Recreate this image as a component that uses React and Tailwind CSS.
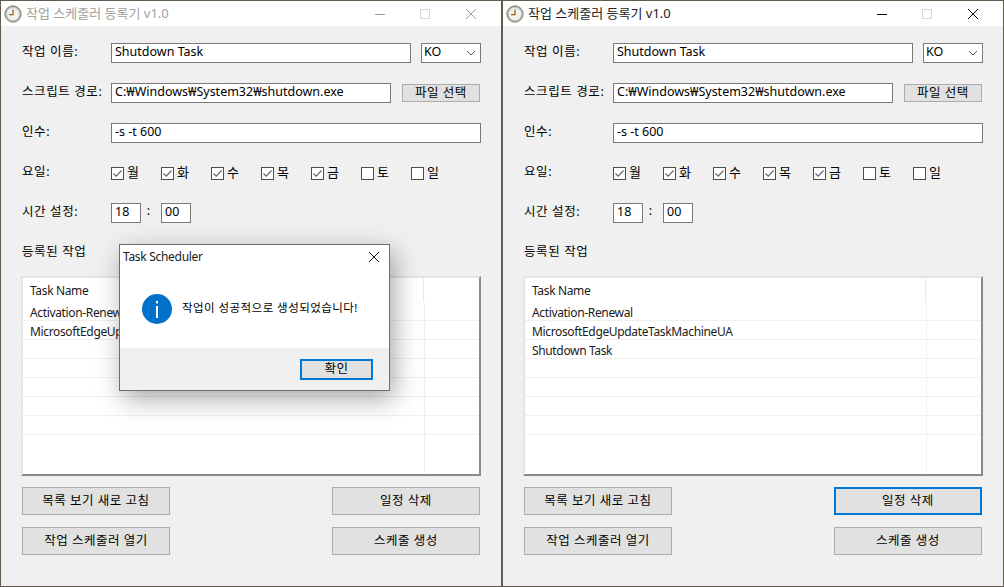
const font = 'font-["Noto_Sans","Noto_Sans_CJK_KR",sans-serif]'

const days = [
  { label: '월', on: true },
  { label: '화', on: true },
  { label: '수', on: true },
  { label: '목', on: true },
  { label: '금', on: true },
  { label: '토', on: false },
  { label: '일', on: false },
]

function ClockIcon() {
  return (
    <svg width="18" height="18" viewBox="0 0 18 18" className="shrink-0">
      <circle cx="9" cy="9" r="8.2" fill="#b9b2a2" stroke="#8b8778" strokeWidth="1" />
      <circle cx="9" cy="9" r="6.4" fill="#f6f3ea" stroke="#a7d0e8" strokeWidth="0.8" />
      <path d="M9 4.5V9.6H5" fill="none" stroke="#8a6a1e" strokeWidth="1.3" />
    </svg>
  )
}

function TitleBar({ active }) {
  const c = active ? '#000000' : '#9b9b9b'
  return (
    <div className="flex items-center h-[25px] bg-white shrink-0 pl-[3px]">
      <ClockIcon />
      <span className={`ml-[4px] text-[13px] ${active ? 'text-[#222222]' : 'text-[#a0a0a0]'}`}>
        작업 스케줄러 등록기 v1.0
      </span>
      <svg width="110" height="12" viewBox="0 0 110 12" className="ml-auto mr-[16px]">
        <path d="M0 6.5H10" stroke={c} />
        <rect x="45.5" y="1.5" width="9" height="9" fill="none" stroke="#d6d6d6" />
        <path d="M91 1L101 11M101 1L91 11" stroke={c} />
      </svg>
    </div>
  )
}

function TextBox({ className, children }) {
  return (
    <div className={`h-5 bg-white border border-[#7a7a7a] pl-[3px] pb-[2px] flex items-center text-[12.5px] leading-4 whitespace-nowrap overflow-hidden ${className}`}>
      {children}
    </div>
  )
}

function Label({ children }) {
  return <div className="w-[89px] shrink-0 pb-[2px] text-[12.5px] leading-4 tracking-[0.6px] whitespace-nowrap">{children}</div>
}

function DayCheck({ label, on }) {
  return (
    <div className="flex items-center w-[50px]">
      <div className="w-[13px] h-[13px] bg-white border border-[#4d4d4d] flex items-center justify-center">
        {on && (
          <svg width="11" height="11" viewBox="0 0 11 11">
            <path d="M1.5 5.5L4.2 8.2L9.5 2.5" fill="none" stroke="#666666" strokeWidth="1.2" />
          </svg>
        )}
      </div>
      <span className="ml-[3px] pb-[2px] text-[13px] leading-4">{label}</span>
    </div>
  )
}

function Btn({ children, focused, className = '' }) {
  return (
    <div className={`flex items-center justify-center bg-[#e1e1e1] text-[12.5px] leading-4 tracking-[0.5px] ${focused ? 'border-2 border-[#0078d7]' : 'border border-[#adadad]'} ${className}`}>
      {children}
    </div>
  )
}

function TaskList({ tasks }) {
  const rows = Array.from({ length: 8 }, (_, i) => tasks[i] || '')
  return (
    <div className="mt-[13px] -ml-px w-[460px] h-[200px] border-2 border-t-[#e4e4e4] border-l-[#e4e4e4] border-r-[#8a8a8a] border-b-[#8a8a8a] bg-white text-[12px] tracking-[-0.35px] text-[#1a1a1a] overflow-hidden">
      <div className="flex h-[24px]">
        <div className="w-[401px] border-r border-[#e8e8e8] pl-[7px] pt-[2px] flex items-center">Task Name</div>
      </div>
      {rows.map((t, i) => (
        <div key={i} className="flex h-[19px] border-b border-[#efefef] last:border-b-0 last:h-[39px]">
          <div className="w-[402px] border-r border-[#efefef] pl-[7px] pt-[3px] leading-[15px] whitespace-nowrap overflow-hidden">{t}</div>
        </div>
      ))}
    </div>
  )
}

function SchedulerWindow({ active, tasks, deleteFocused, children }) {
  return (
    <div className="relative w-[502px] h-[587px] border border-[#5f5c4e] flex flex-col bg-[#f0f0f0] shrink-0">
      <TitleBar active={active} />
      <div className="pl-[21px] pt-[17px] flex flex-col flex-1">
        <div className="flex flex-col gap-5">
          <div className="flex items-center">
            <Label>작업 이름:</Label>
            <TextBox className="w-[300px]">Shutdown Task</TextBox>
            <div className="ml-[10px] w-[60px] h-5 bg-white border border-[#7a7a7a] pl-[2px] pb-[2px] flex items-center justify-between text-[12.5px] leading-4">
              KO
              <svg width="10" height="6" viewBox="0 0 10 6" className="mr-[4px] mt-[2px]">
                <path d="M1 1L5 5L9 1" fill="none" stroke="#555555" />
              </svg>
            </div>
          </div>
          <div className="flex items-center">
            <Label>스크립트 경로:</Label>
            <TextBox className="w-[280px]">C:₩Windows₩System32₩shutdown.exe</TextBox>
            <Btn className="ml-[11px] w-[78px] h-[18px]">파일 선택</Btn>
          </div>
          <div className="flex items-center">
            <Label>인수:</Label>
            <TextBox className="w-[370px]">-s -t 600</TextBox>
          </div>
          <div className="flex items-center h-5">
            <Label>요일:</Label>
            {days.map(d => <DayCheck key={d.label} label={d.label} on={d.on} />)}
          </div>
          <div className="flex items-center">
            <Label>시간 설정:</Label>
            <TextBox className="w-[30px]">18</TextBox>
            <span className="w-[20px] pb-[4px] pr-[5px] text-center text-[12.5px] leading-4">:</span>
            <TextBox className="w-[30px]">00</TextBox>
          </div>
          <div className="h-5 pb-[2px] text-[12.5px] leading-4 tracking-[0.6px] flex items-center">등록된 작업</div>
        </div>

        <TaskList tasks={tasks} />

        <div className="mt-[11px] grid grid-cols-[148px_148px] justify-between w-[458px] gap-y-3">
          <Btn className="h-[28px]">목록 보기 새로 고침</Btn>
          <Btn className="h-[28px]" focused={deleteFocused}>일정 삭제</Btn>
          <Btn className="h-[28px]">작업 스케줄러 열기</Btn>
          <Btn className="h-[28px]">스케줄 생성</Btn>
        </div>
      </div>
      {children}
    </div>
  )
}

function MessageBox() {
  return (
    <div className="absolute left-[118px] top-[243px] w-[271px] h-[147px] bg-white border border-[#6d6d6d] shadow-[4px_8px_24px_rgba(0,0,0,0.35)] flex flex-col">
      <div className="flex items-center justify-between h-[24px] pl-[3px] pr-[9px] text-[12px] tracking-[-0.3px] text-[#1a1a1a]">
        Task Scheduler
        <svg width="12" height="12" viewBox="0 0 12 12">
          <path d="M1 1L11 11M11 1L1 11" stroke="#111111" />
        </svg>
      </div>
      <div className="flex items-center flex-1 pl-[22px]">
        <svg width="30" height="30" viewBox="0 0 30 30" className="shrink-0">
          <circle cx="15" cy="15" r="15" fill="#0070c9" />
          <rect x="14" y="12" width="2" height="12" fill="#ffffff" />
          <rect x="14" y="7" width="2" height="2.4" fill="#ffffff" />
        </svg>
        <span className="ml-[10px] pb-[2px] text-[11.5px] tracking-[0.45px] whitespace-nowrap">작업이 성공적으로 생성되었습니다!</span>
      </div>
      <div className="h-[42px] bg-[#f0f0f0] flex items-center justify-end pr-[16px]">
        <Btn focused className="w-[73px] h-[21px]">확인</Btn>
      </div>
    </div>
  )
}

export default function App() {
  return (
    <div className={`flex w-[1004px] h-[587px] overflow-hidden text-black ${font}`}>
      <SchedulerWindow tasks={['Activation-Renewal', 'MicrosoftEdgeUpdateTaskMachineUA']}>
        <MessageBox />
      </SchedulerWindow>
      <SchedulerWindow active deleteFocused tasks={['Activation-Renewal', 'MicrosoftEdgeUpdateTaskMachineUA', 'Shutdown Task']} />
    </div>
  )
}
